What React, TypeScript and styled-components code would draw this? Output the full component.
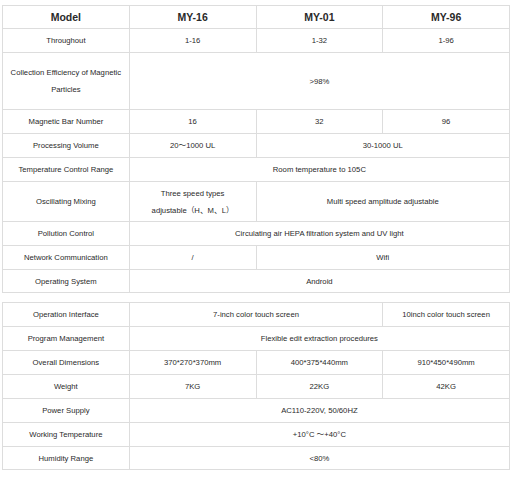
import React from 'react';
import styled, { createGlobalStyle } from 'styled-components';

const GlobalStyle = createGlobalStyle`
  html, body {
    margin: 0;
    padding: 0;
    background: #ffffff;
  }
  body {
    font-family: "Liberation Sans", Arial, "Noto Sans CJK SC", sans-serif;
    color: #333333;
  }
`;

const Page = styled.div`
  display: flex;
  flex-direction: column;
  gap: 9px;
  padding: 5px 2px 0 2px;
  width: 508px;
`;

const SpecTable = styled.table`
  width: 508px;
  border-collapse: collapse;
  table-layout: fixed;
`;

const Row = styled.tr<{ $h: number }>`
  height: ${(p) => p.$h}px;
`;

const Cell = styled.td`
  border: 1px solid #dddddd;
  padding: 0 4px;
  text-align: center;
  vertical-align: middle;
  font-size: 7.7px;
  line-height: 17px;
  color: #2a2a2a;
  font-family: "Liberation Sans", Arial, "Noto Sans CJK SC", sans-serif;
`;

const HeadCell = styled.th`
  border: 1px solid #dddddd;
  padding: 0 4px;
  text-align: center;
  vertical-align: middle;
  font-size: 10.5px;
  font-weight: bold;
  color: #2a2a2a;
  font-family: "Liberation Sans", Arial, sans-serif;
`;

interface SpecRow {
  label: string;
  cells: [React.ReactNode, number][];
  height: number;
}

const firstRows: SpecRow[] = [
  { label: 'Throughout', cells: [['1-16', 1], ['1-32', 1], ['1-96', 1]], height: 24 },
  { label: 'Collection Efficiency of Magnetic Particles', cells: [['>98%', 3]], height: 57 },
  { label: 'Magnetic Bar Number', cells: [['16', 1], ['32', 1], ['96', 1]], height: 24 },
  { label: 'Processing Volume', cells: [['20～1000 UL', 1], ['30-1000 UL', 2]], height: 24 },
  { label: 'Temperature Control Range', cells: [['Room temperature to 105C', 3]], height: 24 },
  {
    label: 'Oscillating Mixing',
    cells: [[<>Three speed types<br />adjustable（H、M、L）</>, 1], ['Multi speed amplitude adjustable', 2]],
    height: 40,
  },
  { label: 'Pollution Control', cells: [['Circulating air HEPA filtration system and UV light', 3]], height: 24 },
  { label: 'Network Communication', cells: [['/', 1], ['Wifi', 2]], height: 24 },
  { label: 'Operating System', cells: [['Android', 3]], height: 23 },
];

const secondRows: SpecRow[] = [
  { label: 'Operation Interface', cells: [['7-inch color touch screen', 2], ['10inch color touch screen', 1]], height: 24 },
  { label: 'Program Management', cells: [['Flexible edit extraction procedures', 3]], height: 24 },
  { label: 'Overall Dimensions', cells: [['370*270*370mm', 1], ['400*375*440mm', 1], ['910*450*490mm', 1]], height: 24 },
  { label: 'Weight', cells: [['7KG', 1], ['22KG', 1], ['42KG', 1]], height: 24 },
  { label: 'Power Supply', cells: [['AC110-220V, 50/60HZ', 3]], height: 24 },
  { label: 'Working Temperature', cells: [['+10°C ～+40°C', 3]], height: 24 },
  { label: 'Humidity Range', cells: [['<80%', 3]], height: 23 },
];

function Rows({ rows }: { rows: SpecRow[] }) {
  return <>
    {rows.map((row) =>
      <Row key={row.label} $h={row.height}>
        <Cell>{row.label}</Cell>
        {row.cells.map(([text, span], i) =>
          <Cell key={i} colSpan={span}>{text}</Cell>
        )}
      </Row>
    )}
  </>;
}

export default function App() {
  return <>
    <GlobalStyle />
    <Page>
      <SpecTable>
        <tbody>
          <Row $h={23}>
            <HeadCell>Model</HeadCell>
            <HeadCell>MY-16</HeadCell>
            <HeadCell>MY-01</HeadCell>
            <HeadCell>MY-96</HeadCell>
          </Row>
          <Rows rows={firstRows} />
        </tbody>
      </SpecTable>
      <SpecTable>
        <tbody>
          <Rows rows={secondRows} />
        </tbody>
      </SpecTable>
    </Page>
  </>;
}
